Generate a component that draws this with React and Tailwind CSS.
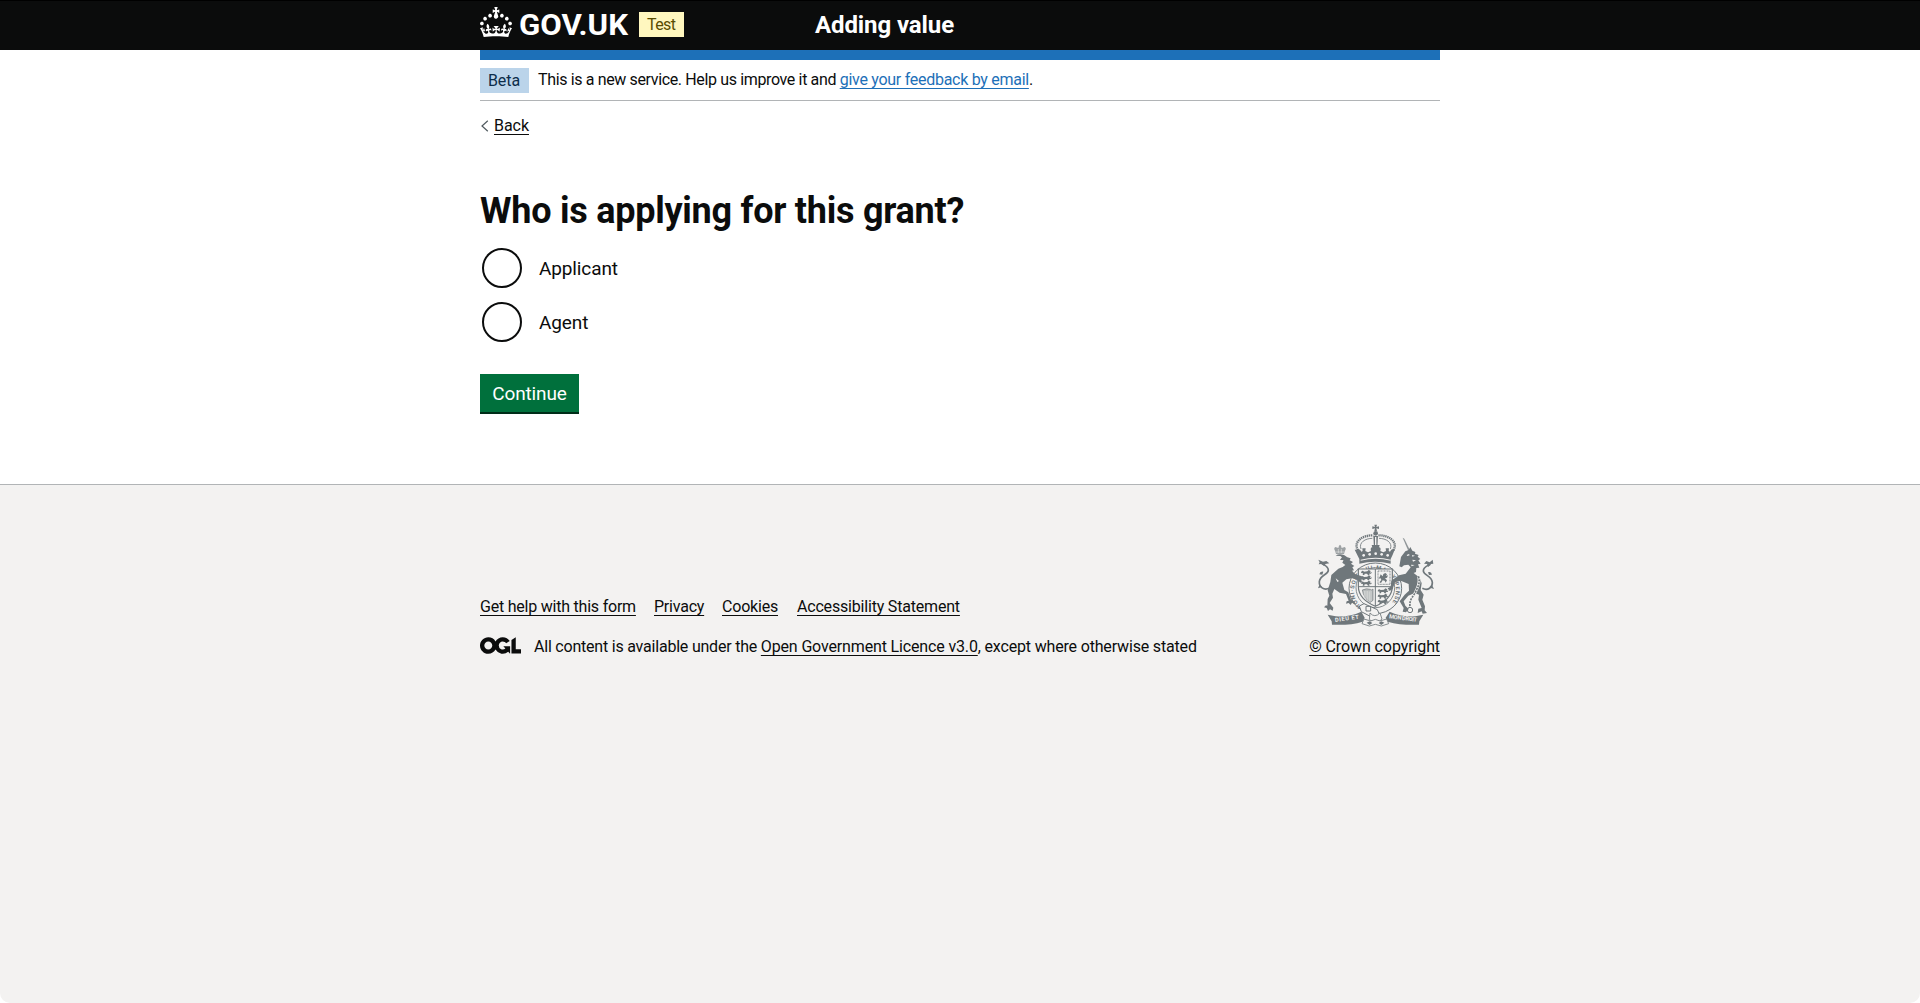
const CROWN =
  'M22.6 10.4c-1 .4-2-.1-2.4-1-.4-.9.1-2 1-2.4.9-.4 2 .1 2.4 1s-.1 2-1 2.4m4.9 3c-1 .4-2-.1-2.4-1-.4-.9.1-2 1-2.4.9-.4 2 .1 2.4 1s0 2-1 2.4m3.3 4.8c-1 .4-2-.1-2.4-1-.4-.9.1-2 1-2.4.9-.4 2 .1 2.4 1s-.1 2-1 2.4M17 4.7l2.3 1.2V2.5l-2.3.7-.2-.2.9-3h-3.4l.9 3-.2.2c-.1.1-2.3-.7-2.3-.7v3.4L15 4.7c.1.1.1.2.2.2l-1.3 4c-.1.2-.1.4-.1.6 0 1.1.8 2 1.9 2.2h.7c1-.2 1.9-1.1 1.9-2.1 0-.2 0-.4-.1-.6l-1.3-4c-.1-.2 0-.2.1-.3m-7.6 5.7c.9.4 2-.1 2.4-1 .4-.9-.1-2-1-2.4-.9-.4-2 .1-2.4 1s0 2 1 2.4m-5 3c.9.4 2-.1 2.4-1 .4-.9-.1-2-1-2.4-.9-.4-2 .1-2.4 1s.1 2 1 2.4m-3.2 4.8c.9.4 2-.1 2.4-1 .4-.9-.1-2-1-2.4-.9-.4-2 .1-2.4 1s0 2 1 2.4m14.8 11c4.4 0 8.6.3 12.3.8 1.1-4.5 2.4-7 3.7-8.8l-2.5-.9c.2 1.3.3 1.9 0 2.7-.4-.4-.8-1.1-1.1-2.3l-1.2 4c.7-.5 1.3-.8 2-.9-1.1 2.5-2.6 3.1-3.5 3-1.1-.2-1.7-1.2-1.5-2.1.3-1.2 1.5-1.5 2.1-.1 1.1-2.3-.8-3-2-2.3 1.9-1.9 2.1-3.5.6-5.6-2.1 1.6-2.1 3.2-1.2 5.5-1.2-1.4-3.2-.6-2.5 1.6.9-1.4 2.1-.5 1.9.8-.2 1.1-1.7 2.1-3.5 1.9-2.7-.2-2.9-2.1-2.9-3.6.7-.1 1.9.5 2.9 1.9l.4-4.3c-1.1 1.1-2.1 1.4-3.2 1.4.4-1.2 2.1-3 2.1-3h-5.4s1.7 1.9 2.1 3c-1.1 0-2.1-.2-3.2-1.4l.4 4.3c1-1.4 2.2-2 2.9-1.9-.1 1.5-.2 3.4-2.9 3.6-1.9.2-3.4-.8-3.5-1.9-.2-1.3 1-2.2 1.9-.8.7-2.3-1.2-3-2.5-1.6.9-2.2.9-3.9-1.2-5.5-1.5 2-1.3 3.7.6 5.6-1.2-.7-3.1 0-2 2.3.6-1.4 1.8-1.1 2.1.1.2.9-.3 1.9-1.5 2.1-.9.2-2.4-.5-3.5-3 .6 0 1.2.3 2 .9l-1.2-4c-.3 1.1-.7 1.9-1.1 2.3-.3-.8-.2-1.4 0-2.7l-2.9.9C1.3 23 2.6 25.5 3.7 30c3.7-.5 7.9-.8 12.3-.8';

const OGL =
  'M421.5 142.8V.1l-50.7 32.3v161.1h112.4v-50.7zm-122.3-9.6A47.12 47.12 0 0 1 221 97.8c0-26 21.1-47.1 47.1-47.1 16.7 0 31.4 8.7 39.7 21.8l42.7-27.2A97.63 97.63 0 0 0 268.1 0c-36.5 0-68.3 20.1-85.1 49.7A98 98 0 0 0 97.8 0C43.9 0 0 43.9 0 97.8s43.9 97.8 97.8 97.8c36.5 0 68.3-20.1 85.1-49.7a97.76 97.76 0 0 0 149.6 25.4l19.4 22.2h3v-87.8h-80l24.3 27.5zM97.8 145c-26 0-47.1-21.1-47.1-47.1s21.1-47.1 47.1-47.1 47.1 21.1 47.1 47.1S123.8 145 97.8 145';

const LINK = 'underline decoration-1 underline-offset-[3px]';

function GovUkLogo() {
  return (
    <svg width="148" height="30" viewBox="0 0 148 30" className="overflow-visible" fill="#fff" role="img" aria-label="GOV.UK">
      <path d={CROWN} />
      <text x="39" y="27.8" textLength="109" lengthAdjust="spacingAndGlyphs" className="font-['Roboto',sans-serif] text-[29.5px] font-bold">
        GOV.UK
      </text>
    </svg>
  );
}

/* Three small lions, stacked in a quarter of the shield. */
function Lions({ x, y }) {
  return (
    <g transform={`translate(${x} ${y})`}>
      {[0, 16, 32].map((dy) => (
        <path
          key={dy}
          d={`M2 ${dy + 5}q4-5 8 0l10-1 4-4 6 3-2 5 6-2-3 5h-6l2 4h-5l-3-4h-7l-1 4H6l1-5-6-1z`}
        />
      ))}
    </g>
  );
}

function RoyalArms() {
  return (
    <svg width="117" height="103" viewBox="81 43 351 309" fill="#6f777b" stroke="#6f777b" strokeWidth="0" aria-hidden="true">
      {/* Crown */}
      <path d="M253 45h8l-2 7 8-2v8l-8-2 2 8h-8l2-8-8 2v-8l8 2z" />
      <circle cx="257" cy="71" r="7" />
      <path d="M250 79h14l-2 36h-10z" />
      <path d="M255 82h4v26h-4z" fill="#f3f2f1" />
      <g fill="none">
        <path d="M204 122c-16-26 14-46 46-45M310 122c16-26-14-46-46-45" strokeWidth="7" strokeDasharray="4 2" />
        <path d="M213 118c-8-20 14-32 34-32M301 118c8-20-14-32-34-32" strokeWidth="2.5" />
      </g>
      <path d="M200 120q10-4 14 6l4-2-1-8h10l-1 8 8 4 9-4q-3-10 4-11l-2-7h24l-2 7q7 1 4 11l9 4 8-4-1-8h10l-1 8 4 2q4-10 14-6-6 16-12 28v14q-47-12-94 0v-14q-6-12-14-28z" />
      <g fill="#f3f2f1">
        <circle cx="221" cy="137" r="4" /><circle cx="239" cy="134" r="4" /><circle cx="257" cy="132" r="4" />
        <circle cx="275" cy="134" r="4" /><circle cx="293" cy="137" r="4" />
        <path d="M212 150q45-12 90 0v3q-45-12-90 0z" />
      </g>
      {/* Garter */}
      <ellipse cx="256" cy="236" rx="79" ry="76" fill="#f3f2f1" strokeWidth="3" />
      <ellipse cx="256" cy="234" rx="58" ry="60" fill="none" strokeWidth="2.5" />
      <path id="garter-line" d="M214 290a63 63 0 1 1 88-6" fill="none" />
      <text className="font-['Roboto',sans-serif] text-[17px] font-bold">
        <textPath href="#garter-line" textLength="290">HONI·SOIT·QUI·MAL·Y·PENSE</textPath>
      </text>
      {/* Shield */}
      <path d="M205 178h102v52c0 30-22 46-51 60-29-14-51-30-51-60z" fill="#f3f2f1" strokeWidth="3.5" />
      <path d="M256 178v112M205 231h102" strokeWidth="3" fill="none" />
      <Lions x="212" y="181" />
      <Lions x="262" y="236" />
      <path d="M264 184h36v40h-36z" fill="none" strokeWidth="2.5" strokeDasharray="3 1.5" />
      <path d="M272 194l6 6 2-7 6-3 5 4-3 5 6-2-3 7-6 2 6 6-4 7-3-6-6-1-5 8-5-2 6-7-2-5-7 1 4-5z" />
      <path d="M217 241q12-6 24-2 4 4 8-1v34l-8 6q-20-12-24-37z" fillOpacity=".45" strokeWidth="2" />
      <path d="M223 244v18m5-18v24m5-24v29m5-28v31m5-33v32" fill="none" stroke="#f3f2f1" strokeWidth="1.5" />
      {/* Lion supporter */}
      <path d="M135 123q-5-7 1-11l9 3 2-7 3-3 3 3 2 7 9-3q6 4 1 11l-3 10h-24z" fillOpacity=".65" />
      <path d="M145 118v12m9-12v12M137 127h26" stroke="#f3f2f1" strokeWidth="1.5" fill="none" />
      <path d="M137 138q10-7 25-2l10 7 10 3-3 6 10 5-6 5 10 7-6 4 5 9-6 1 9 10 18 6 14 5v5l-15 1 5 5-6 4-9-9-16-4-17 3-12 10 6 22 12 7 8 22 12 6-1 8-8-5-4 7-6-6-8 2 2-7 6-2-8-20-19-4-16-11-6 14 2 12-10 16 11 14-2 9-8-4-6 5-4-9-8-2 6-6 4 1 1-20 5-10-5-16 8-25 3-21 21-19 13-5 8-6-9-7 2-6-9-3 6-7-5-4z" />
      <path d="M141 145l7-3 5 4-7 3zM151 152l10-1-5 7zM146 166l9-2 5 6-9 1zM137 206l10 8-5 3z" fill="#f3f2f1" />
      <path d="M118 236c-17 7-31-4-30-20 2-21 26-20 27-34 0-12-12-16-21-22" fill="none" strokeWidth="5" />
      <path d="M85 150l14 6 10-2 9 7-12 2-3 7-9-7-8 1 3-6zM100 186q-10-2-12 8l9 1zM89 224l-5 12 12-4z" />
      {/* Unicorn supporter */}
      <path d="M338 84l5 3 18 37-5 2z" fillOpacity=".75" />
      <path d="M333 142l13-17 10-4 5-9 6 11 9 4-1 5 11 4-3 5 8 7-6 4 7 10-8 2 4 10-9 1-1 12-7 3 18 14 6 17-3 20 9 14-4 15 8 20-1 12 7 8-13 2-3-7-12 5 2-13 10-2-10-25 2-15-13-5-19 8-14 17 5 13 10 10-8 10-10-2 3-11-12-20 15-20 13-12-1-20-24-10-17 5-7 20-9 6-6-8 9-5 2-18 23-16 20-5 15-19-7-8-13 2-7 6-7-3z" />
      <path d="M350 136l7-3 2 4-7 2zM366 136l9 2-8 3zM367 150l11 2-9 4zM363 165l11 1-9 4z" fill="#f3f2f1" />
      <path d="M397 236c17 9 31-4 30-18-2-21-26-20-27-34 0-12 10-14 21-20" fill="none" strokeWidth="5" />
      <path d="M428 150l-9 8-10-4-7 8 9 1 4 9 8-9 7-1zM414 188q10-4 12 7l-9 1zM426 226l6 12-12-4z" />
      <g fill="none">
        <path d="M385 200c7 20-2 32-8 46s-20 22-17 46" stroke="#f3f2f1" strokeWidth="8" />
        <path d="M385 200c7 20-2 32-8 46s-20 22-17 46" strokeWidth="5" strokeDasharray="6 3" />
        <circle cx="360" cy="301" r="8" strokeWidth="3" />
      </g>
      {/* Buckle and strap */}
      <path d="M208 289l14-7 40 18 8 18-18 8-38-20z" fill="#f3f2f1" strokeWidth="3" />
      <path d="M228 290h14v14h-14z" fill="none" strokeWidth="3" />
      <path d="M240 310q14 16 30 0l6 18-16 14-22-12z" fill="#f3f2f1" strokeWidth="2.5" />
      {/* Motto scroll */}
      <path d="M113 315l24 5q44 2 77-14l10 18-6 12q-40 12-92 9l-1-10zM400 315l-24 5q-44 2-77-14l-12 18 6 12q44 12 94 9l1-10z" />
      <path d="M222 328l20 6 14-5 14 5 20-6 6 14-22 7-18-5-18 5-22-7z" fill="#f3f2f1" strokeWidth="2.5" />
      <path d="M230 339l9-4 8 5-8 6zM266 340l8-5 9 4-9 7z" />
      <g fill="#f3f2f1" className="font-['Roboto',sans-serif] text-[17px] font-bold">
        <text transform="translate(136 337) rotate(-8)" textLength="72">DIEU ET</text>
        <text transform="translate(297 326) rotate(7)" textLength="84">MON DROIT</text>
      </g>
    </svg>
  );
}

function Radio({ label }) {
  return (
    <label className="flex h-11 items-center">
      <span className="ml-0.5 size-10 shrink-0 rounded-full border-2 border-[#0b0c0c] bg-white" />
      <span className="ml-[17px] text-[19px] leading-[25px] tracking-[-0.12px]">{label}</span>
    </label>
  );
}

export default function App() {
  return (
    <div className="flex h-[1003px] flex-col overflow-hidden bg-white font-['Roboto',sans-serif] text-base leading-5 text-[#0b0c0c]">
      <header className="h-[50px] shrink-0 border-t border-black bg-[#0b0c0c] text-white">
        <div className="mx-auto flex h-[47px] w-[960px] items-center">
          <div className="flex w-[335px] items-center pb-[5px]">
            <GovUkLogo />
            <span className="mt-[4px] ml-[11px] h-[25px] w-[45px] bg-[#fff7bf] pl-2 leading-[25px] tracking-[-0.6px] text-[#594d00]">Test</span>
          </div>
          <span className="text-2xl leading-6 font-bold tracking-[-0.1px]">Adding value</span>
        </div>
      </header>

      <div className="mx-auto w-[960px] grow">
        <div className="h-2.5 bg-[#1d70b8]" />
        <div className="flex h-[41px] items-start border-b border-[#b1b4b6] pt-2">
          <span className="h-[25px] w-[49px] bg-[#bbd4ea] pl-2 leading-[25px] tracking-[-0.1px] text-[#0c2d4a]">Beta</span>
          <p className="ml-[9px] leading-6 whitespace-pre">
            <span className="tracking-[-0.36px]">This is a new service. Help us improve it and </span>
            <a className={`${LINK} tracking-[-0.28px] text-[#1d70b8]`}>give your feedback by email</a>.
          </p>
        </div>
        <a className="mt-[15px] flex h-5 items-center">
          <svg width="8" height="12" viewBox="0 0 8 12" fill="none" stroke="#505a5f" strokeWidth="1.2" className="ml-px">
            <path d="M6.8.8 1 6l5.8 5.2" />
          </svg>
          <span className={`${LINK} ml-[5px] tracking-[-0.05px]`}>Back</span>
        </a>

        <h1 className="mt-[55px] text-4xl leading-10 font-bold tracking-[-0.25px]">Who is applying for this grant?</h1>
        <div className="mt-[15px] flex flex-col gap-2.5">
          <Radio label="Applicant" />
          <Radio label="Agent" />
        </div>
        <button className="mt-[30px] block h-10 w-[99px] border-b-2 border-[#002d18] bg-[#00703c] pt-px text-[19px] leading-[37px] tracking-[-0.15px] text-white">
          Continue
        </button>
      </div>

      <footer className="h-[519px] shrink-0 rounded-b-[10px] border-t border-[#b1b4b6] bg-[#f3f2f1]">
        <div className="mx-auto flex w-[960px] items-end justify-between pt-[39px]">
          <div>
            <ul className="flex">
              <li className={`${LINK} w-[156px] tracking-[-0.22px]`}>Get help with this form</li>
              <li className={`${LINK} ml-[18px] w-[50px] tracking-[-0.22px]`}>Privacy</li>
              <li className={`${LINK} ml-[18px] w-[56px] tracking-[-0.2px]`}>Cookies</li>
              <li className={`${LINK} ml-[19px] tracking-[-0.19px]`}>Accessibility Statement</li>
            </ul>
            <div className="mt-5 flex items-start">
              <svg width="41" height="17" viewBox="0 0 483.2 195.7" className="mr-[13px]" aria-hidden="true">
                <path fill="#0b0c0c" d={OGL} />
              </svg>
              <p className="whitespace-pre">
                <span className="tracking-[-0.21px]">All content is available under the </span>
                <a className={`${LINK} tracking-[-0.15px]`}>Open Government Licence v3.0</a>
                <span className="tracking-[-0.17px]">, except where otherwise stated</span>
              </p>
            </div>
          </div>
          <div className="flex flex-col items-end">
            <span className="mr-[6px]">
              <RoyalArms />
            </span>
            <a className={`${LINK} mt-2.5 tracking-[-0.1px]`}>© Crown copyright</a>
          </div>
        </div>
      </footer>
    </div>
  );
}
